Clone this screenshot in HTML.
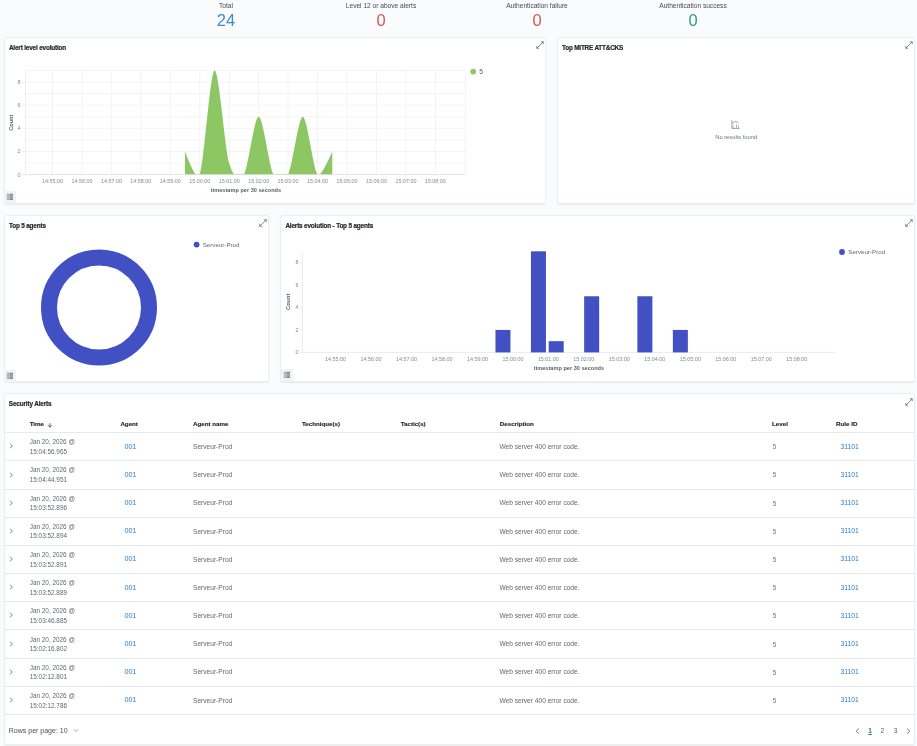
<!DOCTYPE html>
<html><head><meta charset="utf-8"><style>
html,body{margin:0;padding:0}
body{width:917px;height:746px;overflow:hidden;position:relative;background:#fafbfc;font-family:"Liberation Sans", sans-serif}
.t{position:absolute;white-space:nowrap}
#wrap{position:absolute;left:0;top:0;width:917px;height:746px;will-change:transform}
.abs{position:absolute}
svg text{font-family:"Liberation Sans", sans-serif}
.ic{position:absolute}
.panel{position:absolute;box-sizing:border-box;background:#fff;border:1px solid #eceef2;border-radius:2.5px;box-shadow:0 0.9px 1.2px rgba(0,0,0,0.07)}
.lbtn{position:absolute;width:12px;height:12px;background:#f1f2f4;border-radius:0 0 0 2.5px}
.lbtn svg{position:absolute;left:0;top:0}
.hl{position:absolute;height:0.7px;background:#e6e9ed}
</style></head><body><div id="wrap">
<div class="t" style="left:-74.00px;width:600px;text-align:center;top:2.71px;font-size:6.6px;line-height:6.6px;color:#454a55;font-weight:400;">Total</div><div class="t" style="left:-74.00px;width:600px;text-align:center;top:12.43px;font-size:16.5px;line-height:16.5px;color:#3b8ccf;font-weight:400;font-weight:300;">24</div><div class="t" style="left:81.00px;width:600px;text-align:center;top:2.71px;font-size:6.6px;line-height:6.6px;color:#454a55;font-weight:400;">Level 12 or above alerts</div><div class="t" style="left:81.00px;width:600px;text-align:center;top:12.43px;font-size:16.5px;line-height:16.5px;color:#cf5a4e;font-weight:400;font-weight:300;">0</div><div class="t" style="left:237.00px;width:600px;text-align:center;top:2.71px;font-size:6.6px;line-height:6.6px;color:#454a55;font-weight:400;">Authentication failure</div><div class="t" style="left:237.00px;width:600px;text-align:center;top:12.43px;font-size:16.5px;line-height:16.5px;color:#cf5a4e;font-weight:400;font-weight:300;">0</div><div class="t" style="left:393.00px;width:600px;text-align:center;top:2.71px;font-size:6.6px;line-height:6.6px;color:#454a55;font-weight:400;">Authentication success</div><div class="t" style="left:393.00px;width:600px;text-align:center;top:12.43px;font-size:16.5px;line-height:16.5px;color:#2e9a82;font-weight:400;font-weight:300;">0</div><div class="panel" style="left:4px;top:37px;width:542px;height:166.5px"></div><div class="panel" style="left:557px;top:37px;width:358px;height:166.5px"></div><div class="panel" style="left:4px;top:215px;width:264.5px;height:167px"></div><div class="panel" style="left:280px;top:215px;width:635px;height:167px"></div><div class="panel" style="left:4px;top:393px;width:911px;height:351.6px"></div><div class="t" style="left:8.90px;top:44.88px;font-size:6.4px;line-height:6.4px;color:#25282e;font-weight:700;letter-spacing:-0.17px;-webkit-text-stroke:0.2px #25282e;">Alert level evolution</div><svg class="ic" style="left:535px;top:40px" width="10" height="10" viewBox="0 0 10 10"><path d="M2.2,7.8 L7.8,2.2" stroke="#80858d" stroke-width="0.95" stroke-linecap="round" fill="none"/><path d="M5.6,1.3 L8.7,1.3 L8.7,4.4 Z" fill="#80858d"/><path d="M1.3,5.6 L1.3,8.7 L4.4,8.7 Z" fill="#80858d"/></svg><svg class="abs" style="left:0;top:0" width="917" height="746"><line x1="25.5" x2="465.4" y1="174.60" y2="174.60" stroke="#ececec" stroke-width="0.6"/><line x1="25.5" x2="465.4" y1="163.03" y2="163.03" stroke="#ececec" stroke-width="0.6"/><line x1="25.5" x2="465.4" y1="151.46" y2="151.46" stroke="#ececec" stroke-width="0.6"/><line x1="25.5" x2="465.4" y1="139.89" y2="139.89" stroke="#ececec" stroke-width="0.6"/><line x1="25.5" x2="465.4" y1="128.32" y2="128.32" stroke="#ececec" stroke-width="0.6"/><line x1="25.5" x2="465.4" y1="116.75" y2="116.75" stroke="#ececec" stroke-width="0.6"/><line x1="25.5" x2="465.4" y1="105.18" y2="105.18" stroke="#ececec" stroke-width="0.6"/><line x1="25.5" x2="465.4" y1="93.61" y2="93.61" stroke="#ececec" stroke-width="0.6"/><line x1="25.5" x2="465.4" y1="82.04" y2="82.04" stroke="#ececec" stroke-width="0.6"/><line x1="25.5" x2="465.4" y1="70.47" y2="70.47" stroke="#ececec" stroke-width="0.6"/><line x1="52.50" x2="52.50" y1="70.47" y2="174.60" stroke="#ececec" stroke-width="0.6"/><line x1="81.95" x2="81.95" y1="70.47" y2="174.60" stroke="#ececec" stroke-width="0.6"/><line x1="111.40" x2="111.40" y1="70.47" y2="174.60" stroke="#ececec" stroke-width="0.6"/><line x1="140.85" x2="140.85" y1="70.47" y2="174.60" stroke="#ececec" stroke-width="0.6"/><line x1="170.30" x2="170.30" y1="70.47" y2="174.60" stroke="#ececec" stroke-width="0.6"/><line x1="199.75" x2="199.75" y1="70.47" y2="174.60" stroke="#ececec" stroke-width="0.6"/><line x1="229.20" x2="229.20" y1="70.47" y2="174.60" stroke="#ececec" stroke-width="0.6"/><line x1="258.65" x2="258.65" y1="70.47" y2="174.60" stroke="#ececec" stroke-width="0.6"/><line x1="288.10" x2="288.10" y1="70.47" y2="174.60" stroke="#ececec" stroke-width="0.6"/><line x1="317.55" x2="317.55" y1="70.47" y2="174.60" stroke="#ececec" stroke-width="0.6"/><line x1="347.00" x2="347.00" y1="70.47" y2="174.60" stroke="#ececec" stroke-width="0.6"/><line x1="376.45" x2="376.45" y1="70.47" y2="174.60" stroke="#ececec" stroke-width="0.6"/><line x1="405.90" x2="405.90" y1="70.47" y2="174.60" stroke="#ececec" stroke-width="0.6"/><line x1="435.35" x2="435.35" y1="70.47" y2="174.60" stroke="#ececec" stroke-width="0.6"/><line x1="25.5" x2="25.5" y1="70.47" y2="174.60" stroke="#e2e2e2" stroke-width="0.6"/><line x1="465.4" x2="465.4" y1="70.47" y2="174.60" stroke="#ececec" stroke-width="0.6"/><line x1="25.5" x2="465.4" y1="174.60" y2="174.60" stroke="#dcdcdc" stroke-width="0.6"/><clipPath id="c1"><rect x="25.5" y="69.47" width="439.9" height="105.13"/></clipPath><path d="M185.03,151.46Q196.81,182.70,199.75,174.60C204.17,162.45,210.06,72.21,214.47,70.47S224.78,147.41,229.20,163.03S239.51,181.54,243.92,174.60S254.23,116.75,258.65,116.75S268.96,165.92,273.38,174.60S283.68,183.28,288.10,174.60S298.41,116.75,302.82,116.75S313.13,169.39,317.55,174.60Q320.50,178.07,332.27,151.46L332.27,174.60L185.03,174.60Z" fill="#8cc764" clip-path="url(#c1)"/><text x="20.5" y="176.50" font-size="5.4" fill="#858a93" text-anchor="end">0</text><line x1="22.5" x2="25.5" y1="174.60" y2="174.60" stroke="#dcdcdc" stroke-width="0.5"/><text x="20.5" y="153.36" font-size="5.4" fill="#858a93" text-anchor="end">2</text><line x1="22.5" x2="25.5" y1="151.46" y2="151.46" stroke="#dcdcdc" stroke-width="0.5"/><text x="20.5" y="130.22" font-size="5.4" fill="#858a93" text-anchor="end">4</text><line x1="22.5" x2="25.5" y1="128.32" y2="128.32" stroke="#dcdcdc" stroke-width="0.5"/><text x="20.5" y="107.08" font-size="5.4" fill="#858a93" text-anchor="end">6</text><line x1="22.5" x2="25.5" y1="105.18" y2="105.18" stroke="#dcdcdc" stroke-width="0.5"/><text x="20.5" y="83.94" font-size="5.4" fill="#858a93" text-anchor="end">8</text><line x1="22.5" x2="25.5" y1="82.04" y2="82.04" stroke="#dcdcdc" stroke-width="0.5"/><text x="52.50" y="183" font-size="5.4" fill="#858a93" text-anchor="middle">14:55:00</text><text x="81.95" y="183" font-size="5.4" fill="#858a93" text-anchor="middle">14:56:00</text><text x="111.40" y="183" font-size="5.4" fill="#858a93" text-anchor="middle">14:57:00</text><text x="140.85" y="183" font-size="5.4" fill="#858a93" text-anchor="middle">14:58:00</text><text x="170.30" y="183" font-size="5.4" fill="#858a93" text-anchor="middle">14:59:00</text><text x="199.75" y="183" font-size="5.4" fill="#858a93" text-anchor="middle">15:00:00</text><text x="229.20" y="183" font-size="5.4" fill="#858a93" text-anchor="middle">15:01:00</text><text x="258.65" y="183" font-size="5.4" fill="#858a93" text-anchor="middle">15:02:00</text><text x="288.10" y="183" font-size="5.4" fill="#858a93" text-anchor="middle">15:03:00</text><text x="317.55" y="183" font-size="5.4" fill="#858a93" text-anchor="middle">15:04:00</text><text x="347.00" y="183" font-size="5.4" fill="#858a93" text-anchor="middle">15:05:00</text><text x="376.45" y="183" font-size="5.4" fill="#858a93" text-anchor="middle">15:06:00</text><text x="405.90" y="183" font-size="5.4" fill="#858a93" text-anchor="middle">15:07:00</text><text x="435.35" y="183" font-size="5.4" fill="#858a93" text-anchor="middle">15:08:00</text><text x="246" y="191.8" font-size="5.6" font-weight="700" fill="#5a5f69" text-anchor="middle">timestamp per 30 seconds</text><text transform="translate(12.6,122.7) rotate(-90)" font-size="5.6" font-weight="700" fill="#5a5f69" text-anchor="middle">Count</text><circle cx="473.2" cy="71.6" r="2.9" fill="#8cc764"/><text x="479.2" y="74.3" font-size="6.8" fill="#535966">5</text><line x1="302.4" x2="302.4" y1="251.33" y2="352.40" stroke="#dcdcdc" stroke-width="0.6"/><line x1="302.4" x2="835.4" y1="352.40" y2="352.40" stroke="#dcdcdc" stroke-width="0.6"/><text x="298.5" y="354.30" font-size="5.4" fill="#858a93" text-anchor="end">0</text><line x1="300" x2="302.4" y1="352.40" y2="352.40" stroke="#dcdcdc" stroke-width="0.5"/><text x="298.5" y="331.84" font-size="5.4" fill="#858a93" text-anchor="end">2</text><line x1="300" x2="302.4" y1="329.94" y2="329.94" stroke="#dcdcdc" stroke-width="0.5"/><text x="298.5" y="309.38" font-size="5.4" fill="#858a93" text-anchor="end">4</text><line x1="300" x2="302.4" y1="307.48" y2="307.48" stroke="#dcdcdc" stroke-width="0.5"/><text x="298.5" y="286.92" font-size="5.4" fill="#858a93" text-anchor="end">6</text><line x1="300" x2="302.4" y1="285.02" y2="285.02" stroke="#dcdcdc" stroke-width="0.5"/><text x="298.5" y="264.46" font-size="5.4" fill="#858a93" text-anchor="end">8</text><line x1="300" x2="302.4" y1="262.56" y2="262.56" stroke="#dcdcdc" stroke-width="0.5"/><text x="335.50" y="361" font-size="5.4" fill="#858a93" text-anchor="middle">14:55:00</text><text x="370.98" y="361" font-size="5.4" fill="#858a93" text-anchor="middle">14:56:00</text><text x="406.46" y="361" font-size="5.4" fill="#858a93" text-anchor="middle">14:57:00</text><text x="441.94" y="361" font-size="5.4" fill="#858a93" text-anchor="middle">14:58:00</text><text x="477.42" y="361" font-size="5.4" fill="#858a93" text-anchor="middle">14:59:00</text><text x="512.90" y="361" font-size="5.4" fill="#858a93" text-anchor="middle">15:00:00</text><text x="548.38" y="361" font-size="5.4" fill="#858a93" text-anchor="middle">15:01:00</text><text x="583.86" y="361" font-size="5.4" fill="#858a93" text-anchor="middle">15:02:00</text><text x="619.34" y="361" font-size="5.4" fill="#858a93" text-anchor="middle">15:03:00</text><text x="654.82" y="361" font-size="5.4" fill="#858a93" text-anchor="middle">15:04:00</text><text x="690.30" y="361" font-size="5.4" fill="#858a93" text-anchor="middle">15:05:00</text><text x="725.78" y="361" font-size="5.4" fill="#858a93" text-anchor="middle">15:06:00</text><text x="761.26" y="361" font-size="5.4" fill="#858a93" text-anchor="middle">15:07:00</text><text x="796.74" y="361" font-size="5.4" fill="#858a93" text-anchor="middle">15:08:00</text><text x="569" y="369.5" font-size="5.6" font-weight="700" fill="#5a5f69" text-anchor="middle">timestamp per 30 seconds</text><text transform="translate(290,301.8) rotate(-90)" font-size="5.6" font-weight="700" fill="#5a5f69" text-anchor="middle">Count</text><rect x="495.46" y="329.94" width="15" height="22.46" fill="#4150c2"/><rect x="530.94" y="251.33" width="15" height="101.07" fill="#4150c2"/><rect x="548.68" y="341.17" width="15" height="11.23" fill="#4150c2"/><rect x="584.16" y="296.25" width="15" height="56.15" fill="#4150c2"/><rect x="637.38" y="296.25" width="15" height="56.15" fill="#4150c2"/><rect x="672.86" y="329.94" width="15" height="22.46" fill="#4150c2"/><circle cx="842" cy="252" r="2.9" fill="#4150c2"/><text x="848.3" y="254.1" font-size="6.2" fill="#62666f">Serveur-Prod</text><circle cx="99" cy="307.5" r="50" fill="none" stroke="#4150c2" stroke-width="16"/><circle cx="196.6" cy="244.6" r="2.9" fill="#4150c2"/><text x="202.7" y="247.3" font-size="6.2" fill="#62666f">Serveur-Prod</text></svg><div class="lbtn" style="left:4.3px;top:191.2px"><svg width="12" height="12" viewBox="0 0 12 12"><rect x="2.8" y="2.8" width="6.2" height="6.2" fill="#a9adb4"/><rect x="5.9" y="2.8" width="3.1" height="6.2" fill="#878b93"/><path d="M2.8,4.9 H9 M2.8,6.9 H9" stroke="#e6e8eb" stroke-width="0.45"/></svg></div><div class="t" style="left:8.90px;top:223.18px;font-size:6.4px;line-height:6.4px;color:#25282e;font-weight:700;letter-spacing:-0.17px;-webkit-text-stroke:0.2px #25282e;">Top 5 agents</div><svg class="ic" style="left:258px;top:218px" width="10" height="10" viewBox="0 0 10 10"><path d="M2.2,7.8 L7.8,2.2" stroke="#80858d" stroke-width="0.95" stroke-linecap="round" fill="none"/><path d="M5.6,1.3 L8.7,1.3 L8.7,4.4 Z" fill="#80858d"/><path d="M1.3,5.6 L1.3,8.7 L4.4,8.7 Z" fill="#80858d"/></svg><div class="lbtn" style="left:4.3px;top:369.5px"><svg width="12" height="12" viewBox="0 0 12 12"><rect x="2.8" y="2.8" width="6.2" height="6.2" fill="#a9adb4"/><rect x="5.9" y="2.8" width="3.1" height="6.2" fill="#878b93"/><path d="M2.8,4.9 H9 M2.8,6.9 H9" stroke="#e6e8eb" stroke-width="0.45"/></svg></div><div class="t" style="left:285.40px;top:223.18px;font-size:6.4px;line-height:6.4px;color:#25282e;font-weight:700;letter-spacing:-0.17px;-webkit-text-stroke:0.2px #25282e;">Alerts evolution - Top 5 agents</div><svg class="ic" style="left:904px;top:218.4px" width="10" height="10" viewBox="0 0 10 10"><path d="M2.2,7.8 L7.8,2.2" stroke="#80858d" stroke-width="0.95" stroke-linecap="round" fill="none"/><path d="M5.6,1.3 L8.7,1.3 L8.7,4.4 Z" fill="#80858d"/><path d="M1.3,5.6 L1.3,8.7 L4.4,8.7 Z" fill="#80858d"/></svg><div class="lbtn" style="left:281px;top:369.3px"><svg width="12" height="12" viewBox="0 0 12 12"><rect x="2.8" y="2.8" width="6.2" height="6.2" fill="#a9adb4"/><rect x="5.9" y="2.8" width="3.1" height="6.2" fill="#878b93"/><path d="M2.8,4.9 H9 M2.8,6.9 H9" stroke="#e6e8eb" stroke-width="0.45"/></svg></div><div class="t" style="left:562.00px;top:44.88px;font-size:6.4px;line-height:6.4px;color:#25282e;font-weight:700;letter-spacing:-0.2px;-webkit-text-stroke:0.2px #25282e;">Top MITRE ATT&amp;CKS</div><svg class="ic" style="left:903.8px;top:40px" width="10" height="10" viewBox="0 0 10 10"><path d="M2.2,7.8 L7.8,2.2" stroke="#80858d" stroke-width="0.95" stroke-linecap="round" fill="none"/><path d="M5.6,1.3 L8.7,1.3 L8.7,4.4 Z" fill="#80858d"/><path d="M1.3,5.6 L1.3,8.7 L4.4,8.7 Z" fill="#80858d"/></svg><svg class="ic" style="left:731px;top:120px" width="10" height="10" viewBox="0 0 10 10"><path d="M0.9,0 V8.4 H8.7" stroke="#858990" stroke-width="0.8" fill="none"/><path d="M1.3,3.5 L3.5,1.6 L5,1.4 L7.6,3.2" stroke="#858990" stroke-width="0.8" fill="none"/><path d="M2.2,8.4 V5.6 M5.5,8.4 V4.2 M7.4,8.4 V5.2" stroke="#9a9ea5" stroke-width="0.7" fill="none"/></svg><div class="t" style="left:436.20px;width:600px;text-align:center;top:134.53px;font-size:5.75px;line-height:5.75px;color:#69707d;font-weight:400;">No results found</div><div class="t" style="left:8.80px;top:401.18px;font-size:6.4px;line-height:6.4px;color:#25282e;font-weight:700;letter-spacing:-0.15px;-webkit-text-stroke:0.2px #25282e;">Security Alerts</div><svg class="ic" style="left:903.7px;top:396.6px" width="10" height="10" viewBox="0 0 10 10"><path d="M2.2,7.8 L7.8,2.2" stroke="#80858d" stroke-width="0.95" stroke-linecap="round" fill="none"/><path d="M5.6,1.3 L8.7,1.3 L8.7,4.4 Z" fill="#80858d"/><path d="M1.3,5.6 L1.3,8.7 L4.4,8.7 Z" fill="#80858d"/></svg><div class="t" style="left:29.70px;top:420.95px;font-size:6.2px;line-height:6.2px;color:#25282e;font-weight:700;-webkit-text-stroke:0.15px #25282e;">Time</div><div class="t" style="left:120.40px;top:420.95px;font-size:6.2px;line-height:6.2px;color:#25282e;font-weight:700;-webkit-text-stroke:0.15px #25282e;">Agent</div><div class="t" style="left:193.00px;top:420.95px;font-size:6.2px;line-height:6.2px;color:#25282e;font-weight:700;-webkit-text-stroke:0.15px #25282e;">Agent name</div><div class="t" style="left:302.00px;top:420.95px;font-size:6.2px;line-height:6.2px;color:#25282e;font-weight:700;-webkit-text-stroke:0.15px #25282e;">Technique(s)</div><div class="t" style="left:400.70px;top:420.95px;font-size:6.2px;line-height:6.2px;color:#25282e;font-weight:700;-webkit-text-stroke:0.15px #25282e;">Tactic(s)</div><div class="t" style="left:499.80px;top:420.95px;font-size:6.2px;line-height:6.2px;color:#25282e;font-weight:700;-webkit-text-stroke:0.15px #25282e;">Description</div><div class="t" style="left:772.10px;top:420.95px;font-size:6.2px;line-height:6.2px;color:#25282e;font-weight:700;-webkit-text-stroke:0.15px #25282e;">Level</div><div class="t" style="left:836.10px;top:420.95px;font-size:6.2px;line-height:6.2px;color:#25282e;font-weight:700;-webkit-text-stroke:0.15px #25282e;">Rule ID</div><svg class="ic" style="left:47px;top:422.6px" width="6" height="5" viewBox="0 0 6 5"><path d="M2.9,0.2 V4.2 M0.9,2.2 L2.9,4.2 L4.9,2.2" stroke="#3f434c" stroke-width="0.8" fill="none"/></svg><div class="hl" style="left:4.3px;top:432.2px;width:910px"></div><svg class="ic" style="left:9px;top:443.40px" width="5" height="6" viewBox="0 0 5 6"><path d="M1,0.8 L3.4,3 L1,5.2" stroke="#5f646d" stroke-width="0.75" fill="none"/></svg><div class="t" style="left:29.70px;top:439.28px;font-size:6.4px;line-height:6.4px;color:#62676f;font-weight:400;">Jan 20, 2026 @</div><div class="t" style="left:29.70px;top:448.88px;font-size:6.4px;line-height:6.4px;color:#62676f;font-weight:400;">15:04:56.965</div><div class="t" style="left:124.60px;top:442.61px;font-size:7.2px;line-height:7.2px;color:#2f7fc6;font-weight:400;">001</div><div class="t" style="left:193.00px;top:444.01px;font-size:6.6px;line-height:6.6px;color:#62676f;font-weight:400;">Serveur-Prod</div><div class="t" style="left:499.40px;top:444.01px;font-size:6.6px;line-height:6.6px;color:#62676f;font-weight:400;">Web server 400 error code.</div><div class="t" style="left:772.80px;top:444.27px;font-size:6.3px;line-height:6.3px;color:#6d717a;font-weight:400;">5</div><div class="t" style="left:258.90px;width:600px;text-align:right;top:443.64px;font-size:6.8px;line-height:6.8px;color:#2f7fc6;font-weight:400;">31101</div><div class="hl" style="left:4.3px;top:460.38px;width:910px"></div><svg class="ic" style="left:9px;top:471.58px" width="5" height="6" viewBox="0 0 5 6"><path d="M1,0.8 L3.4,3 L1,5.2" stroke="#5f646d" stroke-width="0.75" fill="none"/></svg><div class="t" style="left:29.70px;top:467.46px;font-size:6.4px;line-height:6.4px;color:#62676f;font-weight:400;">Jan 20, 2026 @</div><div class="t" style="left:29.70px;top:477.06px;font-size:6.4px;line-height:6.4px;color:#62676f;font-weight:400;">15:04:44.951</div><div class="t" style="left:124.60px;top:470.79px;font-size:7.2px;line-height:7.2px;color:#2f7fc6;font-weight:400;">001</div><div class="t" style="left:193.00px;top:472.19px;font-size:6.6px;line-height:6.6px;color:#62676f;font-weight:400;">Serveur-Prod</div><div class="t" style="left:499.40px;top:472.19px;font-size:6.6px;line-height:6.6px;color:#62676f;font-weight:400;">Web server 400 error code.</div><div class="t" style="left:772.80px;top:472.45px;font-size:6.3px;line-height:6.3px;color:#6d717a;font-weight:400;">5</div><div class="t" style="left:258.90px;width:600px;text-align:right;top:471.82px;font-size:6.8px;line-height:6.8px;color:#2f7fc6;font-weight:400;">31101</div><div class="hl" style="left:4.3px;top:488.56px;width:910px"></div><svg class="ic" style="left:9px;top:499.76px" width="5" height="6" viewBox="0 0 5 6"><path d="M1,0.8 L3.4,3 L1,5.2" stroke="#5f646d" stroke-width="0.75" fill="none"/></svg><div class="t" style="left:29.70px;top:495.64px;font-size:6.4px;line-height:6.4px;color:#62676f;font-weight:400;">Jan 20, 2026 @</div><div class="t" style="left:29.70px;top:505.24px;font-size:6.4px;line-height:6.4px;color:#62676f;font-weight:400;">15:03:52.896</div><div class="t" style="left:124.60px;top:498.97px;font-size:7.2px;line-height:7.2px;color:#2f7fc6;font-weight:400;">001</div><div class="t" style="left:193.00px;top:500.37px;font-size:6.6px;line-height:6.6px;color:#62676f;font-weight:400;">Serveur-Prod</div><div class="t" style="left:499.40px;top:500.37px;font-size:6.6px;line-height:6.6px;color:#62676f;font-weight:400;">Web server 400 error code.</div><div class="t" style="left:772.80px;top:500.63px;font-size:6.3px;line-height:6.3px;color:#6d717a;font-weight:400;">5</div><div class="t" style="left:258.90px;width:600px;text-align:right;top:500.00px;font-size:6.8px;line-height:6.8px;color:#2f7fc6;font-weight:400;">31101</div><div class="hl" style="left:4.3px;top:516.74px;width:910px"></div><svg class="ic" style="left:9px;top:527.94px" width="5" height="6" viewBox="0 0 5 6"><path d="M1,0.8 L3.4,3 L1,5.2" stroke="#5f646d" stroke-width="0.75" fill="none"/></svg><div class="t" style="left:29.70px;top:523.82px;font-size:6.4px;line-height:6.4px;color:#62676f;font-weight:400;">Jan 20, 2026 @</div><div class="t" style="left:29.70px;top:533.42px;font-size:6.4px;line-height:6.4px;color:#62676f;font-weight:400;">15:03:52.894</div><div class="t" style="left:124.60px;top:527.15px;font-size:7.2px;line-height:7.2px;color:#2f7fc6;font-weight:400;">001</div><div class="t" style="left:193.00px;top:528.55px;font-size:6.6px;line-height:6.6px;color:#62676f;font-weight:400;">Serveur-Prod</div><div class="t" style="left:499.40px;top:528.55px;font-size:6.6px;line-height:6.6px;color:#62676f;font-weight:400;">Web server 400 error code.</div><div class="t" style="left:772.80px;top:528.81px;font-size:6.3px;line-height:6.3px;color:#6d717a;font-weight:400;">5</div><div class="t" style="left:258.90px;width:600px;text-align:right;top:528.18px;font-size:6.8px;line-height:6.8px;color:#2f7fc6;font-weight:400;">31101</div><div class="hl" style="left:4.3px;top:544.92px;width:910px"></div><svg class="ic" style="left:9px;top:556.12px" width="5" height="6" viewBox="0 0 5 6"><path d="M1,0.8 L3.4,3 L1,5.2" stroke="#5f646d" stroke-width="0.75" fill="none"/></svg><div class="t" style="left:29.70px;top:552.00px;font-size:6.4px;line-height:6.4px;color:#62676f;font-weight:400;">Jan 20, 2026 @</div><div class="t" style="left:29.70px;top:561.60px;font-size:6.4px;line-height:6.4px;color:#62676f;font-weight:400;">15:03:52.891</div><div class="t" style="left:124.60px;top:555.33px;font-size:7.2px;line-height:7.2px;color:#2f7fc6;font-weight:400;">001</div><div class="t" style="left:193.00px;top:556.73px;font-size:6.6px;line-height:6.6px;color:#62676f;font-weight:400;">Serveur-Prod</div><div class="t" style="left:499.40px;top:556.73px;font-size:6.6px;line-height:6.6px;color:#62676f;font-weight:400;">Web server 400 error code.</div><div class="t" style="left:772.80px;top:556.99px;font-size:6.3px;line-height:6.3px;color:#6d717a;font-weight:400;">5</div><div class="t" style="left:258.90px;width:600px;text-align:right;top:556.36px;font-size:6.8px;line-height:6.8px;color:#2f7fc6;font-weight:400;">31101</div><div class="hl" style="left:4.3px;top:573.10px;width:910px"></div><svg class="ic" style="left:9px;top:584.30px" width="5" height="6" viewBox="0 0 5 6"><path d="M1,0.8 L3.4,3 L1,5.2" stroke="#5f646d" stroke-width="0.75" fill="none"/></svg><div class="t" style="left:29.70px;top:580.18px;font-size:6.4px;line-height:6.4px;color:#62676f;font-weight:400;">Jan 20, 2026 @</div><div class="t" style="left:29.70px;top:589.78px;font-size:6.4px;line-height:6.4px;color:#62676f;font-weight:400;">15:03:52.889</div><div class="t" style="left:124.60px;top:583.51px;font-size:7.2px;line-height:7.2px;color:#2f7fc6;font-weight:400;">001</div><div class="t" style="left:193.00px;top:584.91px;font-size:6.6px;line-height:6.6px;color:#62676f;font-weight:400;">Serveur-Prod</div><div class="t" style="left:499.40px;top:584.91px;font-size:6.6px;line-height:6.6px;color:#62676f;font-weight:400;">Web server 400 error code.</div><div class="t" style="left:772.80px;top:585.17px;font-size:6.3px;line-height:6.3px;color:#6d717a;font-weight:400;">5</div><div class="t" style="left:258.90px;width:600px;text-align:right;top:584.54px;font-size:6.8px;line-height:6.8px;color:#2f7fc6;font-weight:400;">31101</div><div class="hl" style="left:4.3px;top:601.28px;width:910px"></div><svg class="ic" style="left:9px;top:612.48px" width="5" height="6" viewBox="0 0 5 6"><path d="M1,0.8 L3.4,3 L1,5.2" stroke="#5f646d" stroke-width="0.75" fill="none"/></svg><div class="t" style="left:29.70px;top:608.36px;font-size:6.4px;line-height:6.4px;color:#62676f;font-weight:400;">Jan 20, 2026 @</div><div class="t" style="left:29.70px;top:617.96px;font-size:6.4px;line-height:6.4px;color:#62676f;font-weight:400;">15:03:46.885</div><div class="t" style="left:124.60px;top:611.69px;font-size:7.2px;line-height:7.2px;color:#2f7fc6;font-weight:400;">001</div><div class="t" style="left:193.00px;top:613.09px;font-size:6.6px;line-height:6.6px;color:#62676f;font-weight:400;">Serveur-Prod</div><div class="t" style="left:499.40px;top:613.09px;font-size:6.6px;line-height:6.6px;color:#62676f;font-weight:400;">Web server 400 error code.</div><div class="t" style="left:772.80px;top:613.35px;font-size:6.3px;line-height:6.3px;color:#6d717a;font-weight:400;">5</div><div class="t" style="left:258.90px;width:600px;text-align:right;top:612.72px;font-size:6.8px;line-height:6.8px;color:#2f7fc6;font-weight:400;">31101</div><div class="hl" style="left:4.3px;top:629.46px;width:910px"></div><svg class="ic" style="left:9px;top:640.66px" width="5" height="6" viewBox="0 0 5 6"><path d="M1,0.8 L3.4,3 L1,5.2" stroke="#5f646d" stroke-width="0.75" fill="none"/></svg><div class="t" style="left:29.70px;top:636.54px;font-size:6.4px;line-height:6.4px;color:#62676f;font-weight:400;">Jan 20, 2026 @</div><div class="t" style="left:29.70px;top:646.14px;font-size:6.4px;line-height:6.4px;color:#62676f;font-weight:400;">15:02:16.802</div><div class="t" style="left:124.60px;top:639.87px;font-size:7.2px;line-height:7.2px;color:#2f7fc6;font-weight:400;">001</div><div class="t" style="left:193.00px;top:641.27px;font-size:6.6px;line-height:6.6px;color:#62676f;font-weight:400;">Serveur-Prod</div><div class="t" style="left:499.40px;top:641.27px;font-size:6.6px;line-height:6.6px;color:#62676f;font-weight:400;">Web server 400 error code.</div><div class="t" style="left:772.80px;top:641.53px;font-size:6.3px;line-height:6.3px;color:#6d717a;font-weight:400;">5</div><div class="t" style="left:258.90px;width:600px;text-align:right;top:640.90px;font-size:6.8px;line-height:6.8px;color:#2f7fc6;font-weight:400;">31101</div><div class="hl" style="left:4.3px;top:657.64px;width:910px"></div><svg class="ic" style="left:9px;top:668.84px" width="5" height="6" viewBox="0 0 5 6"><path d="M1,0.8 L3.4,3 L1,5.2" stroke="#5f646d" stroke-width="0.75" fill="none"/></svg><div class="t" style="left:29.70px;top:664.72px;font-size:6.4px;line-height:6.4px;color:#62676f;font-weight:400;">Jan 20, 2026 @</div><div class="t" style="left:29.70px;top:674.32px;font-size:6.4px;line-height:6.4px;color:#62676f;font-weight:400;">15:02:12.801</div><div class="t" style="left:124.60px;top:668.05px;font-size:7.2px;line-height:7.2px;color:#2f7fc6;font-weight:400;">001</div><div class="t" style="left:193.00px;top:669.45px;font-size:6.6px;line-height:6.6px;color:#62676f;font-weight:400;">Serveur-Prod</div><div class="t" style="left:499.40px;top:669.45px;font-size:6.6px;line-height:6.6px;color:#62676f;font-weight:400;">Web server 400 error code.</div><div class="t" style="left:772.80px;top:669.71px;font-size:6.3px;line-height:6.3px;color:#6d717a;font-weight:400;">5</div><div class="t" style="left:258.90px;width:600px;text-align:right;top:669.08px;font-size:6.8px;line-height:6.8px;color:#2f7fc6;font-weight:400;">31101</div><div class="hl" style="left:4.3px;top:685.82px;width:910px"></div><svg class="ic" style="left:9px;top:697.02px" width="5" height="6" viewBox="0 0 5 6"><path d="M1,0.8 L3.4,3 L1,5.2" stroke="#5f646d" stroke-width="0.75" fill="none"/></svg><div class="t" style="left:29.70px;top:692.90px;font-size:6.4px;line-height:6.4px;color:#62676f;font-weight:400;">Jan 20, 2026 @</div><div class="t" style="left:29.70px;top:702.50px;font-size:6.4px;line-height:6.4px;color:#62676f;font-weight:400;">15:02:12.786</div><div class="t" style="left:124.60px;top:696.23px;font-size:7.2px;line-height:7.2px;color:#2f7fc6;font-weight:400;">001</div><div class="t" style="left:193.00px;top:697.63px;font-size:6.6px;line-height:6.6px;color:#62676f;font-weight:400;">Serveur-Prod</div><div class="t" style="left:499.40px;top:697.63px;font-size:6.6px;line-height:6.6px;color:#62676f;font-weight:400;">Web server 400 error code.</div><div class="t" style="left:772.80px;top:697.89px;font-size:6.3px;line-height:6.3px;color:#6d717a;font-weight:400;">5</div><div class="t" style="left:258.90px;width:600px;text-align:right;top:697.26px;font-size:6.8px;line-height:6.8px;color:#2f7fc6;font-weight:400;">31101</div><div class="hl" style="left:4.3px;top:714.00px;width:910px"></div><div class="t" style="left:8.80px;top:727.47px;font-size:7.0px;line-height:7.0px;color:#4a4f59;font-weight:400;">Rows per page: 10</div><svg class="ic" style="left:72.5px;top:728px" width="6" height="5" viewBox="0 0 6 5"><path d="M0.8,1.2 L3,3.4 L5.2,1.2" stroke="#69707d" stroke-width="0.6" fill="none"/></svg><svg class="ic" style="left:855px;top:727.6px" width="5" height="7" viewBox="0 0 5 7"><path d="M3.9,0.6 L1.2,3.2 L3.9,5.8" stroke="#60656e" stroke-width="0.85" fill="none"/></svg><div class="t" style="left:868.20px;top:728.00px;font-size:6.5px;line-height:6.5px;color:#3a6c9e;font-weight:700;text-decoration:underline;">1</div><div class="t" style="left:880.60px;top:728.00px;font-size:6.5px;line-height:6.5px;color:#535966;font-weight:400;">2</div><div class="t" style="left:893.80px;top:728.00px;font-size:6.5px;line-height:6.5px;color:#535966;font-weight:400;">3</div><svg class="ic" style="left:905.8px;top:727.6px" width="5" height="7" viewBox="0 0 5 7"><path d="M1.1,0.6 L3.8,3.2 L1.1,5.8" stroke="#60656e" stroke-width="0.85" fill="none"/></svg>
</div></body></html>
